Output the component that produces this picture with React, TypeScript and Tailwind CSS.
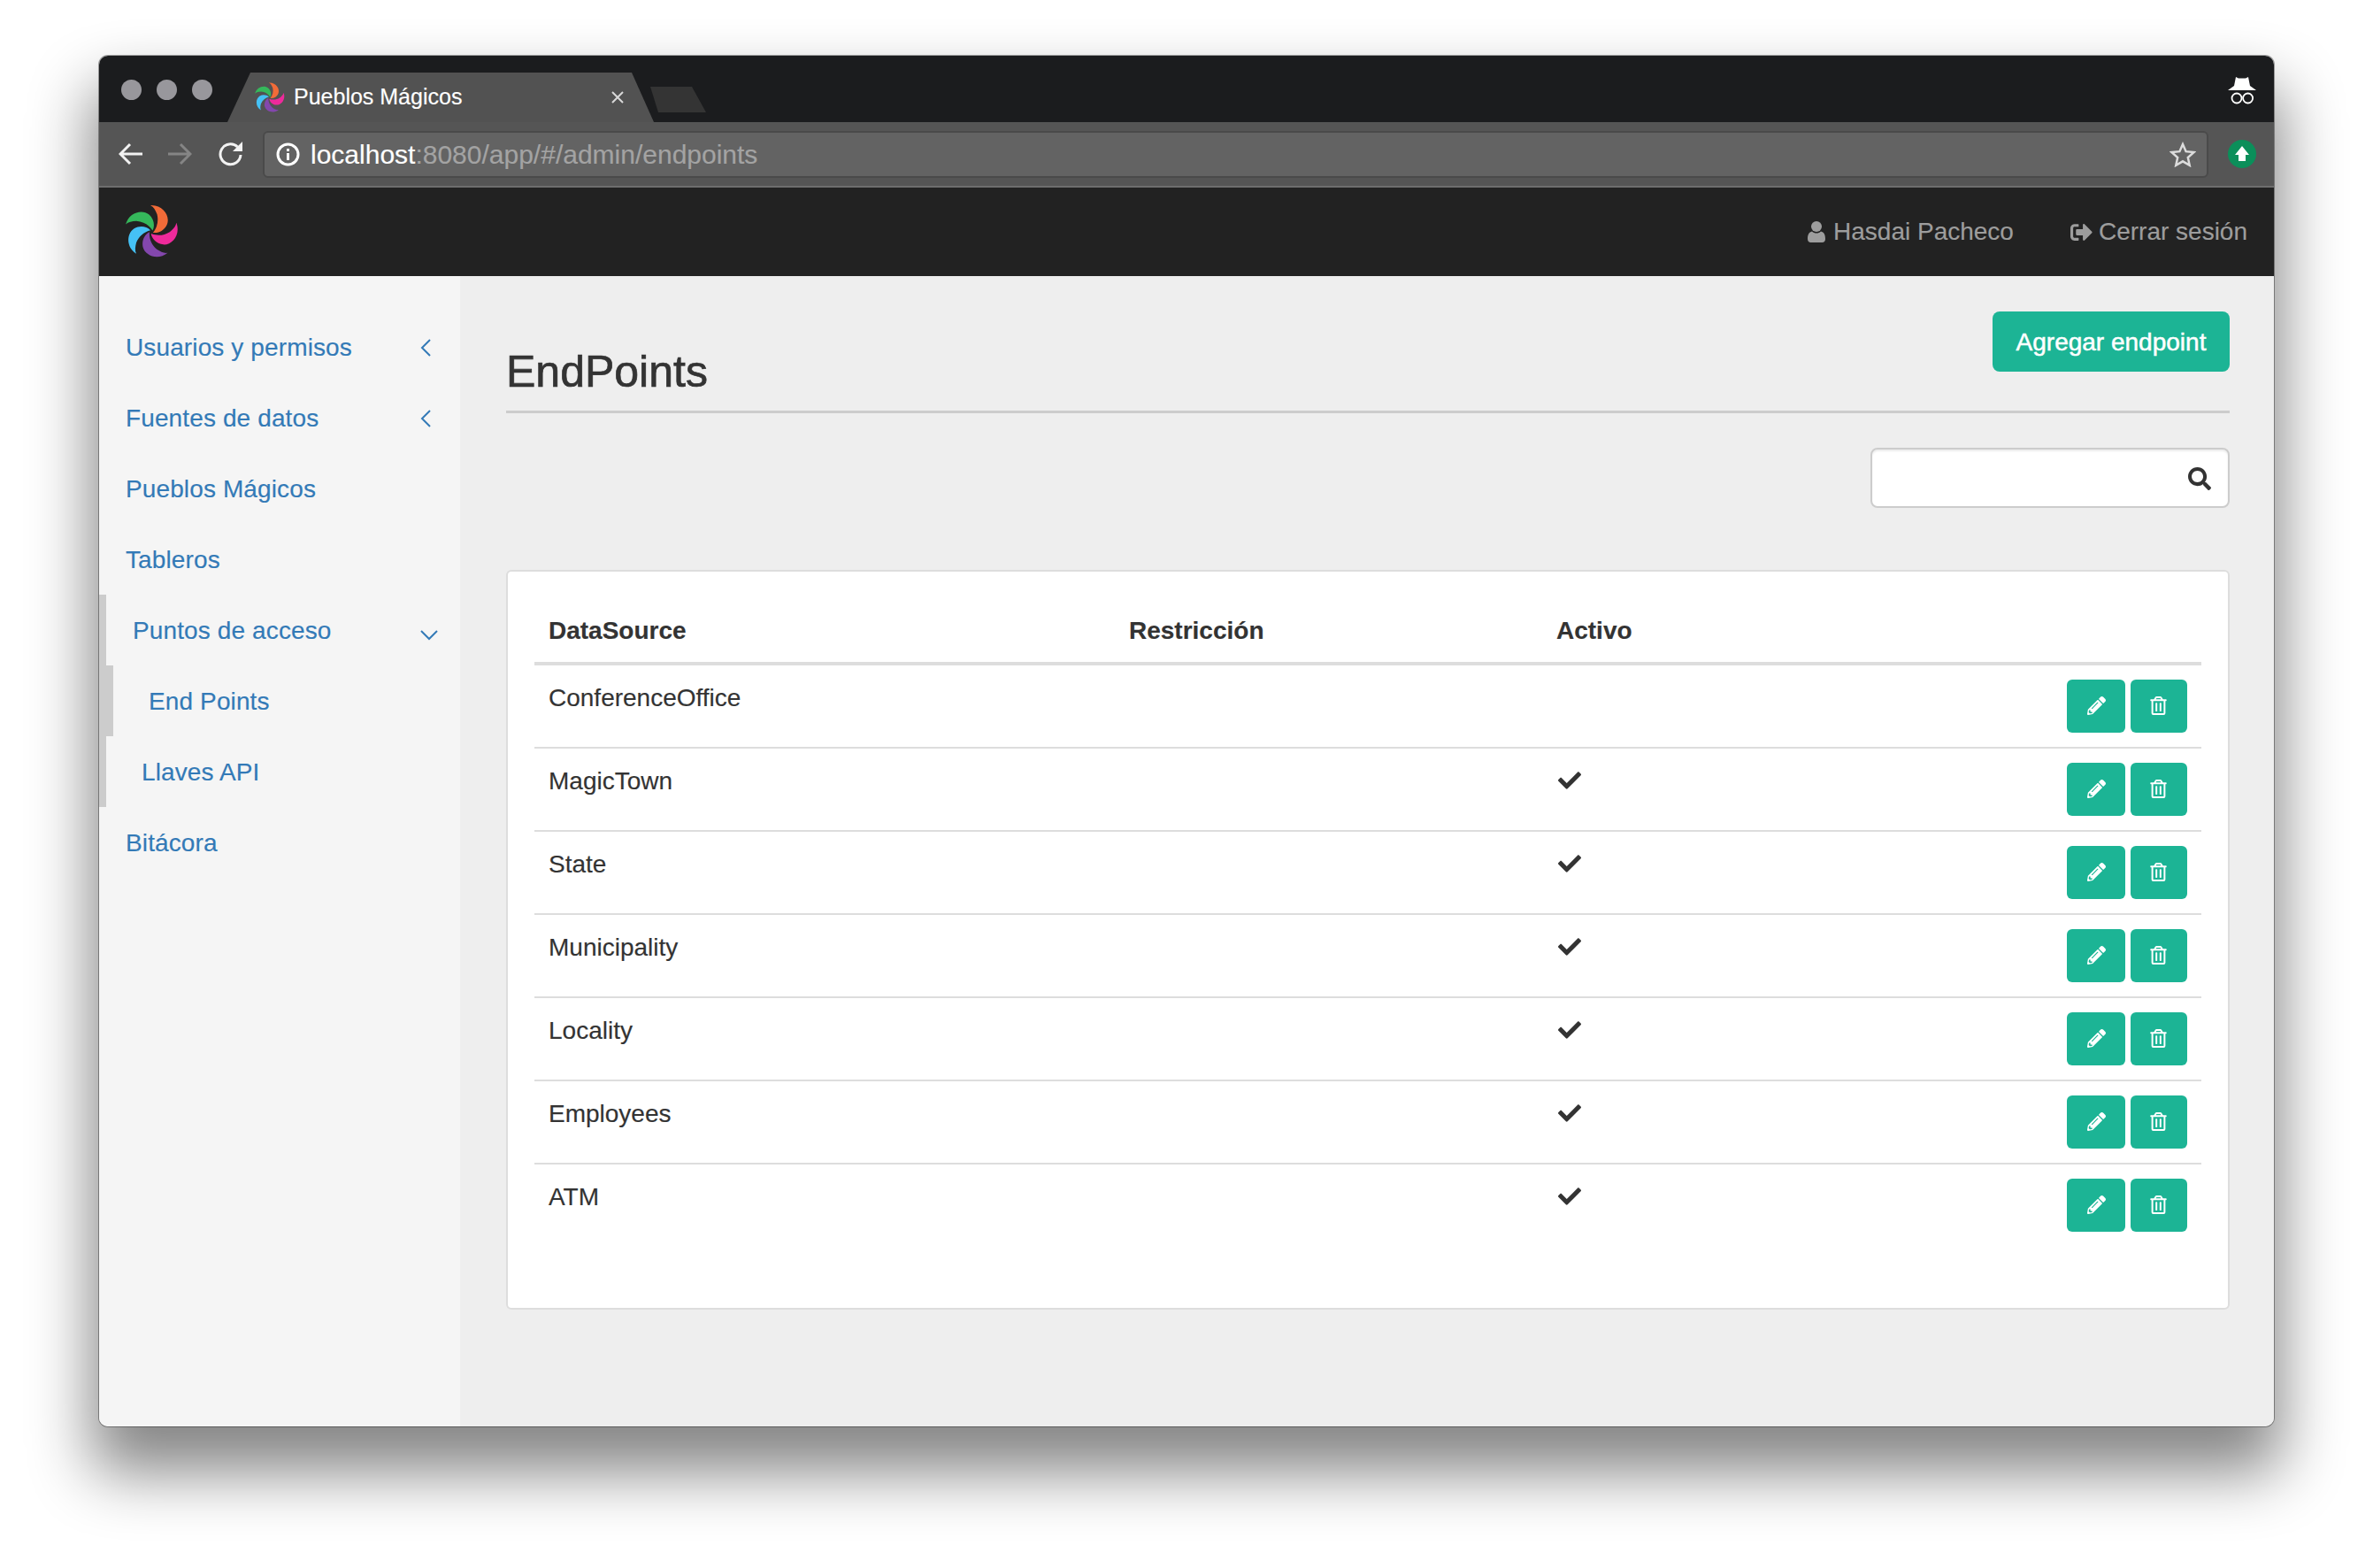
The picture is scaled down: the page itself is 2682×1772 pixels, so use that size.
import { FaCheck, FaPencilAlt, FaRegTrashAlt, FaSearch, FaSignOutAlt } from "react-icons/fa";

const rows = [
  { name: "ConferenceOffice", active: false },
  { name: "MagicTown", active: true },
  { name: "State", active: true },
  { name: "Municipality", active: true },
  { name: "Locality", active: true },
  { name: "Employees", active: true },
  { name: "ATM", active: true },
];

const petals = [
  { color: "#f26b38", angle: 0 },
  { color: "#ee2a9b", angle: 72 },
  { color: "#8347ad", angle: 144 },
  { color: "#45c1f5", angle: 216 },
  { color: "#35b85b", angle: 288 },
];

function Logo({ size }: { size: number }) {
  return (
    <svg width={size} height={size} viewBox="-33 -33 66 66">
      {petals.map((p) => (
        <path
          key={p.color}
          fill={p.color}
          transform={`rotate(${p.angle})`}
          d="M-1 -32C14 -33 23 -19 19 -9C16 -2 9 2 2 1C7 -5 9 -13 7 -21C5 -26 3 -30 -1 -32Z"
        />
      ))}
    </svg>
  );
}

function SideLink({ label, chevron, indent }: { label: string; chevron?: "left" | "down"; indent?: string }) {
  return (
    <a className={`flex h-[80px] items-center pt-[1px] text-[28px] tracking-[0.12px] text-[#337ab7] ${indent ?? "pl-[30px]"}`}>
      <span>{label}</span>
      {chevron === "left" && (
        <svg className="ml-auto mr-[32px]" width="14" height="22" viewBox="0 0 14 22" fill="none" stroke="#337ab7" strokeWidth="2">
          <path d="M12 2L3 11L12 20" />
        </svg>
      )}
      {chevron === "down" && (
        <svg className="ml-auto mr-[24px] mt-[10px]" width="22" height="14" viewBox="0 0 22 14" fill="none" stroke="#337ab7" strokeWidth="2">
          <path d="M2 2L11 11L20 2" />
        </svg>
      )}
    </a>
  );
}

export default function App() {
  return (
    <div className="h-[1772px] w-[2682px] overflow-hidden bg-white pl-[112px] pt-[63px] font-['Liberation_Sans',sans-serif] [-webkit-text-stroke:0.15px]">
      <div className="flex h-[1549px] w-[2458px] flex-col overflow-hidden rounded-[10px] shadow-[0_44px_70px_8px_rgba(0,0,0,0.48),0_0_0_1px_rgba(0,0,0,0.35)]">
        {/* Tab strip */}
        <div className="flex h-[75px] shrink-0 items-end bg-[#1b1c1e]">
          <div className="mb-[25px] ml-[25px] flex gap-[17px]">
            <span className="h-[23px] w-[23px] rounded-full bg-[#98979c]" />
            <span className="h-[23px] w-[23px] rounded-full bg-[#98979c]" />
            <span className="h-[23px] w-[23px] rounded-full bg-[#98979c]" />
          </div>
          <div className="ml-[17px] flex h-[56px] w-[482px] items-center bg-[#525252] pl-[30px] pr-[32px] [clip-path:polygon(0_100%,26px_0,457px_0,100%_100%)]">
            <Logo size={35} />
            <span className="ml-[10px] text-[25px] text-white">Pueblos Mágicos</span>
            <svg className="ml-auto" width="18" height="18" viewBox="0 0 18 18" stroke="#d8d8d8" strokeWidth="2">
              <path d="M3 3L15 15M15 3L3 15" />
            </svg>
          </div>
          <div className="mb-[11px] ml-[-4px] h-[29px] w-[63px] bg-[#343434] [clip-path:polygon(0_0,47px_0,100%_100%,9px_100%)]" />
          <svg className="mb-[20px] ml-auto mr-[20px]" width="32" height="31" viewBox="0 0 32 31" fill="white">
            <path d="M9 0L12 1.5H20L23 0L25 10H7Z" />
            <path d="M7 10H25L32 15H0Z" />
            <circle cx="10" cy="24" r="5.5" fill="none" stroke="white" strokeWidth="1.8" />
            <circle cx="22.6" cy="24" r="5.5" fill="none" stroke="white" strokeWidth="1.8" />
          </svg>
        </div>

        {/* Toolbar */}
        <div className="flex h-[74px] shrink-0 items-center border-b-2 border-[#6e6e6e] bg-[#555555]">
          <svg className="ml-[22px]" width="28" height="26" viewBox="0 0 28 26" fill="none" stroke="#f2f2f2" strokeWidth="3">
            <path d="M13 2L2 13L13 24M2 13H27" />
          </svg>
          <svg className="ml-[27px]" width="28" height="26" viewBox="0 0 28 26" fill="none" stroke="#858585" strokeWidth="3">
            <path d="M15 2L26 13L15 24M26 13H1" />
          </svg>
          <svg className="ml-[29px]" width="30" height="28" viewBox="0 0 30 28" fill="none">
            <path d="M22.5 6A11.5 11.5 0 1 0 26 15" stroke="#f2f2f2" strokeWidth="3" />
            <path d="M28 0V11H17Z" fill="#f2f2f2" />
          </svg>
          <div className="ml-[21px] flex h-[53px] w-[2199px] items-center rounded-[6px] border-2 border-[#4a4a4a] bg-[#636363] pl-[13px] pr-[12px]">
            <svg width="27" height="27" viewBox="0 0 27 27" fill="none" stroke="white" strokeWidth="3">
              <circle cx="13.5" cy="13.5" r="11.5" />
              <path d="M13.5 12V20M13.5 7V10" />
            </svg>
            <span className="ml-[12px] text-[30px] text-white">
              localhost<span className="text-[#a3a3a3]">:8080/app/#/admin/endpoints</span>
            </span>
            <svg className="ml-auto" width="30" height="29" viewBox="0 0 30 29" fill="none" stroke="#dcdcdc" strokeWidth="2.5">
              <path d="M15 3L18.6 11.2L27.5 12.1L20.8 18L22.7 26.8L15 22.3L7.3 26.8L9.2 18L2.5 12.1L11.4 11.2Z" />
            </svg>
          </div>
          <svg className="ml-[22px]" width="32" height="32" viewBox="0 0 32 32">
            <circle cx="16" cy="16" r="16" fill="#0b8f5a" />
            <path d="M16 7L24 17H20V24H12V17H8Z" fill="white" />
          </svg>
        </div>

        {/* App navbar */}
        <div className="flex h-[100px] shrink-0 items-center bg-[#222222] pl-[28px] pr-[30px] text-[28px] text-[#9d9d9d]">
          <Logo size={62} />
          <div className="ml-auto flex items-center gap-[9px]">
            <svg width="20" height="24" viewBox="0 0 20 24" fill="currentColor">
              <circle cx="10" cy="6" r="6" />
              <path d="M0 20C0 15 1.5 12.5 5 11.5C6.5 13 8 13.5 10 13.5C12 13.5 13.5 13 15 11.5C18.5 12.5 20 15 20 20C20 22.5 18.5 24 16.5 24H3.5C1.5 24 0 22.5 0 20Z" />
            </svg>
            <span>Hasdai Pacheco</span>
          </div>
          <div className="ml-[64px] flex items-center gap-[7px]">
            <FaSignOutAlt size={25} />
            <span>Cerrar sesión</span>
          </div>
        </div>

        <div className="flex min-h-0 flex-1">
          {/* Sidebar */}
          <aside className="w-[408px] shrink-0 bg-[#f5f5f5] pt-[40px]">
            <SideLink label="Usuarios y permisos" chevron="left" />
            <SideLink label="Fuentes de datos" chevron="left" />
            <SideLink label="Pueblos Mágicos" />
            <SideLink label="Tableros" />
            <div className="border-l-[8px] border-[#cccccc]">
              <SideLink label="Puntos de acceso" chevron="down" />
              <div className="border-l-[8px] border-[#cccccc]">
                <SideLink label="End Points" indent="pl-[40px]" />
              </div>
              <SideLink label="Llaves API" indent="pl-[40px]" />
            </div>
            <SideLink label="Bitácora" />
          </aside>

          {/* Main */}
          <main className="flex-1 bg-[#eeeeee] pl-[52px] pr-[50px] pt-[40px]">
            <div className="flex h-[115px] items-start justify-between border-b-[3px] border-[#cccccc]">
              <h1 className="mt-[43px] text-[50px] leading-[50px] text-[#333333] [-webkit-text-stroke:0.7px]">EndPoints</h1>
              <button className="flex h-[68px] w-[268px] items-center justify-center rounded-[8px] bg-[#1cb495] pt-[1px] text-[28px] text-white [-webkit-text-stroke:0.5px]">
                Agregar endpoint
              </button>
            </div>

            <div className="mt-[39px] flex justify-end">
              <div className="flex h-[68px] w-[406px] items-center justify-end rounded-[8px] border-2 border-[#cccccc] bg-white pr-[19px] pt-[2px] shadow-[inset_0_2px_2px_rgba(0,0,0,0.075)]">
                <FaSearch size={26} className="text-[#333333]" />
              </div>
            </div>

            <div className="mt-[70px] h-[836px] rounded-[6px] border-2 border-[#dddddd] bg-white p-[30px] text-[28px] text-[#333333]">
              <table className="w-full table-fixed border-separate border-spacing-0">
                <thead>
                  <tr className="text-left">
                    <th className="w-[656px] border-b-4 border-[#dddddd] px-[16px] pb-[15px] pt-[17px] font-bold leading-[40px]">DataSource</th>
                    <th className="w-[483px] border-b-4 border-[#dddddd] px-[16px] pb-[15px] pt-[17px] font-bold leading-[40px]">Restricción</th>
                    <th className="border-b-4 border-[#dddddd] px-[16px] pb-[15px] pt-[17px] font-bold leading-[40px]">Activo</th>
                    <th className="w-[200px] border-b-4 border-[#dddddd]" />
                  </tr>
                </thead>
                <tbody>
                  {rows.map((row, i) => {
                    const rule = i < rows.length - 1 ? "border-b-2 border-[#dddddd]" : "";
                    return (
                      <tr key={row.name}>
                        <td className={`px-[16px] pt-[17px] align-top leading-[40px] ${rule}`}>{row.name}</td>
                        <td className={rule} />
                        <td className={`px-[16px] pt-[16px] align-top ${rule}`}>
                          {row.active && (
                            <div className="ml-[2px] flex h-[40px] items-center">
                              <FaCheck size={26} />
                            </div>
                          )}
                        </td>
                        <td className={`py-[16px] pr-[16px] ${rule}`}>
                          <div className="flex justify-end gap-[6px] text-white">
                            <button className="flex h-[60px] w-[66px] items-center justify-center rounded-[6px] bg-[#1cb495] pb-[1px]">
                              <FaPencilAlt size={21} />
                            </button>
                            <button className="flex h-[60px] w-[64px] items-center justify-center rounded-[6px] bg-[#1cb495] pb-[1px] pr-[1px]">
                              <FaRegTrashAlt size={21} />
                            </button>
                          </div>
                        </td>
                      </tr>
                    );
                  })}
                </tbody>
              </table>
            </div>
          </main>
        </div>
      </div>
    </div>
  );
}
